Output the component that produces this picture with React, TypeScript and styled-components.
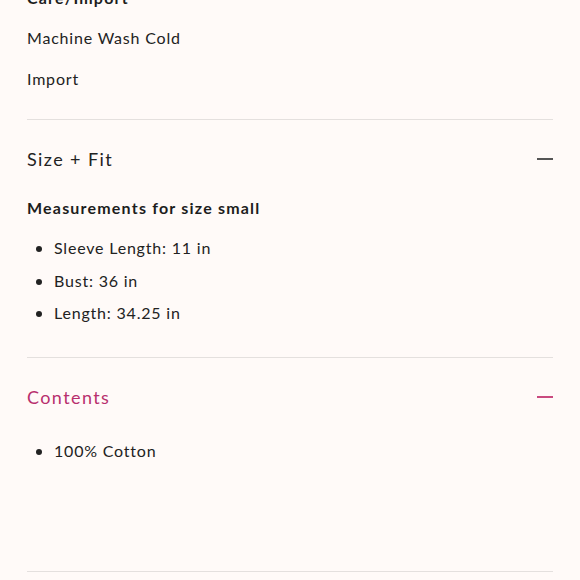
import React from "react";
import styled, { createGlobalStyle } from "styled-components";

const Global = createGlobalStyle`
  html, body { margin: 0; padding: 0; background: #fffaf8; }
  body { font-family: "Lato", "Open Sans", sans-serif; color: #222; }
`;

const Page = styled.div`
  width: 580px;
  height: 580px;
  overflow: hidden;
  background: #fffaf8;
`;

const Inner = styled.div`
  margin-top: -14px;
  padding: 0 27px;
`;

const Section = styled.section<{ $pb?: number }>`
  border-bottom: 1px solid #e4e0de;
  padding-bottom: ${(p) => p.$pb ?? 24}px;
`;

const SubHeading = styled.h4`
  margin: 0;
  font-size: 16px;
  line-height: 24px;
  font-weight: 700;
  letter-spacing: 1.2px;
  color: #1d1d1d;
`;

const Para = styled.p<{ $mt: number }>`
  margin: ${(p) => p.$mt}px 0 0;
  font-size: 16px;
  line-height: 24px;
  letter-spacing: 0.8px;
  color: #222;
`;

const Header = styled.div<{ $active?: boolean }>`
  display: flex;
  align-items: center;
  justify-content: space-between;
  height: 78px;
  font-size: 18px;
  letter-spacing: 1.4px;
  color: ${(p) => (p.$active ? "#b8306e" : "#222")};
`;

const Minus = styled.span<{ $active?: boolean }>`
  width: 16px;
  height: 2px;
  background: ${(p) => (p.$active ? "#c94a7f" : "#555")};
`;

const Body = styled.div<{ $mt: number }>`
  margin-top: ${(p) => p.$mt}px;
`;

const List = styled.ul<{ $mt: number }>`
  margin: ${(p) => p.$mt}px 0 0;
  padding: 0 0 0 27px;
  list-style: disc;
  li {
    font-size: 16px;
    line-height: 32.5px;
    letter-spacing: 0.8px;
    color: #222;
  }
  li::marker { font-size: 17px; }
`;

export default function App() {
  return (
    <Page>
      <Global />
      <Inner>
        <Section $pb={28}>
          <SubHeading>Care/Import</SubHeading>
          <Para $mt={16}>Machine Wash Cold</Para>
          <Para $mt={17}>Import</Para>
        </Section>
        <Section $pb={27}>
          <Header>
            <span>Size + Fit</span>
            <Minus />
          </Header>
          <Body $mt={-2}>
            <SubHeading>Measurements for size small</SubHeading>
            <List $mt={12}>
              <li>Sleeve Length: 11 in</li>
              <li>Bust: 36 in</li>
              <li>Length: 34.25 in</li>
            </List>
          </Body>
        </Section>
        <Section $pb={104}>
          <Header $active>
            <span>Contents</span>
            <Minus $active />
          </Header>
          <List $mt={-1}>
            <li>100% Cotton</li>
          </List>
        </Section>
      </Inner>
    </Page>
  );
}
